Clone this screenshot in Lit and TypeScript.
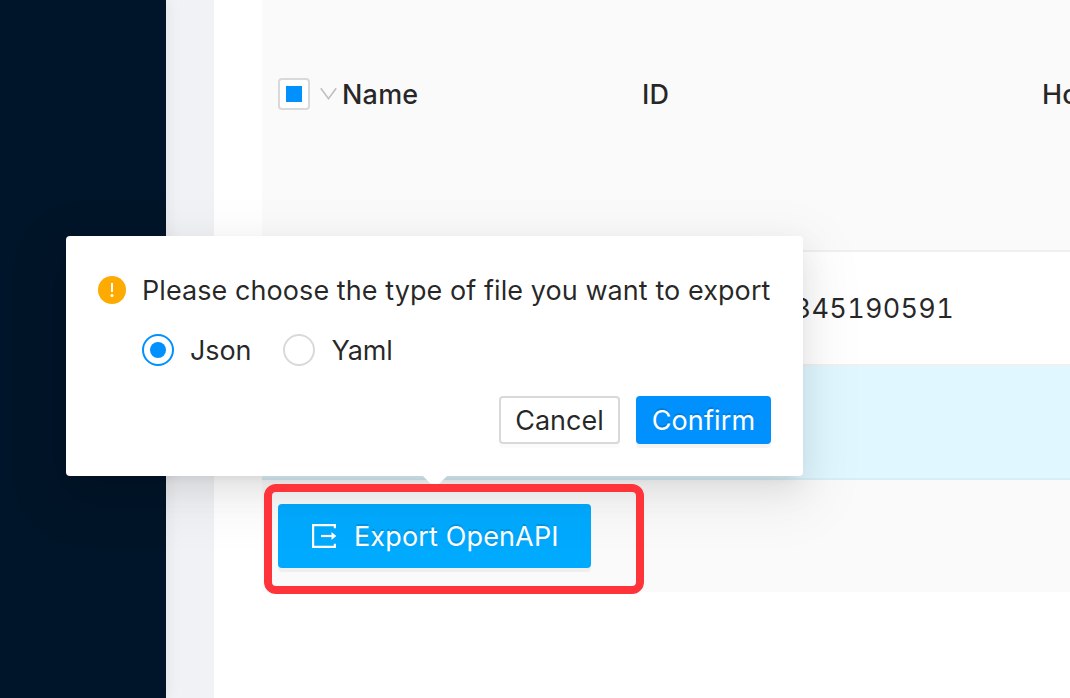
import { LitElement, html, css } from "lit";
import { customElement, property } from "lit/decorators.js";

@customElement("confirm-popover")
export class ConfirmPopover extends LitElement {
  @property() selected = "Json";

  static styles = css`
    :host {
      display: block;
      position: relative;
      box-sizing: border-box;
      width: 737px;
      height: 240px;
      padding: 32px;
      background: #fff;
      border-radius: 4px;
      color: rgba(0, 0, 0, 0.85);
      font-size: 27px;
      line-height: 44px;
      box-shadow: 0 6px 12px -8px rgba(0, 0, 0, 0.12), 0 12px 32px rgba(0, 0, 0, 0.08),
        0 18px 56px 16px rgba(0, 0, 0, 0.05);
    }
    .title {
      display: flex;
      align-items: center;
      gap: 16px;
      height: 44px;
      white-space: nowrap;
    }
    .title svg { flex: none; }
    .title span { padding-top: 2px; letter-spacing: 0.07px; }
    .options {
      display: flex;
      height: 44px;
      margin: 16px 0 0 44px;
      white-space: nowrap;
    }
    .option { display: flex; align-items: center; }
    .option + .option { margin-left: 32px; }
    .option span { margin-left: 16px; padding-top: 2px; letter-spacing: -0.1px; }
    .radio {
      display: flex;
      align-items: center;
      justify-content: center;
      box-sizing: border-box;
      width: 32px;
      height: 32px;
      border: 2px solid #d9d9d9;
      border-radius: 50%;
    }
    .radio.on { border-color: #0091ff; }
    .radio.on::after {
      content: "";
      width: 16px;
      height: 16px;
      border-radius: 50%;
      background: #0091ff;
    }
    .actions {
      display: flex;
      justify-content: flex-end;
      gap: 16px;
      margin-top: 24px;
    }
    .btn {
      box-sizing: border-box;
      height: 48px;
      border: 2px solid #d9d9d9;
      border-radius: 4px;
      text-align: center;
      white-space: nowrap;
      letter-spacing: 0.02px;
      line-height: 45px;
      box-shadow: 0 4px 0 rgba(0, 0, 0, 0.016);
    }
    .cancel { width: 121px; }
    .primary {
      width: 135px;
      border-color: #0091ff;
      background: #0091ff;
      color: #fff;
      letter-spacing: 0.15px;
      text-shadow: 0 -2px 0 rgba(0, 0, 0, 0.12);
      box-shadow: 0 4px 0 rgba(0, 0, 0, 0.043);
    }
    .arrow {
      position: absolute;
      left: 357px;
      top: 228px;
      width: 24px;
      height: 24px;
      clip-path: polygon(0 50%, 100% 50%, 50% 100%);
      background: #fff;
    }
  `;

  render() {
    return html`
      <div class="title">
        <svg width="28" height="28" viewBox="0 0 28 28">
          <circle cx="14" cy="14" r="14" fill="#ffaa00" />
          <path d="M13 7h2v9h-2z" fill="#fff" />
          <circle cx="14" cy="19.6" r="1.5" fill="#fff" />
        </svg>
        <span>Please choose the type of file you want to export</span>
      </div>
      <div class="options">
        ${["Json", "Yaml"].map(
          (name) => html`<div class="option">
            <i class="radio ${name === this.selected ? "on" : ""}"></i><span>${name}</span>
          </div>`
        )}
      </div>
      <div class="actions">
        <div class="btn cancel">Cancel</div>
        <div class="btn primary">Confirm</div>
      </div>
      <div class="arrow"></div>
    `;
  }
}

@customElement("app-root")
export class AppRoot extends LitElement {
  static styles = css`
    :host {
      display: flex;
      position: relative;
      width: 1070px;
      height: 698px;
      overflow: hidden;
      background: #f0f2f5;
      font-family: Inter, "Liberation Sans", sans-serif;
      font-size: 27px;
      color: rgba(0, 0, 0, 0.85);
    }
    .sider {
      flex: none;
      width: 166px;
      background: #001529;
      box-shadow: 2px 0 14px rgba(0, 0, 0, 0.06);
    }
    .content {
      flex: 1;
      min-width: 0;
      margin-left: 48px;
      padding-left: 48px;
      background: #fff;
    }
    .row {
      display: grid;
      grid-template-columns: 364px 400px 400px;
      align-items: center;
      box-sizing: border-box;
      height: 114px;
      padding-left: 16px;
      border-bottom: 2px solid #f0f0f0;
      white-space: nowrap;
    }
    .head {
      height: 252px;
      padding-bottom: 62px;
      background: #fafafa;
      font-weight: 500;
      letter-spacing: 0.2px;
    }
    .first { display: flex; align-items: center; }
    .check {
      display: flex;
      align-items: center;
      justify-content: center;
      box-sizing: border-box;
      width: 32px;
      height: 32px;
      border: 2px solid #d9d9d9;
      border-radius: 4px;
      background: #fff;
    }
    .check::after { content: ""; width: 16px; height: 16px; background: #0091ff; }
    .first svg { margin: 0 5px 0 10px; }
    .num {
      grid-column: 2;
      width: 312px;
      text-align: right;
      font-variant-numeric: tabular-nums;
      letter-spacing: 0.3px;
    }
    .selected { background: #e0f7ff; border-color: #d9eff7; }
    .foot {
      box-sizing: border-box;
      height: 112px;
      padding: 24px 16px;
      background: #fafafa;
    }
    .export {
      display: flex;
      align-items: center;
      box-sizing: border-box;
      width: 313px;
      height: 64px;
      padding-left: 32px;
      border-radius: 4px;
      background: #00aaff;
      color: #fff;
      letter-spacing: 0.14px;
      white-space: nowrap;
      text-shadow: 0 -2px 0 rgba(0, 0, 0, 0.12);
      box-shadow: 0 4px 0 rgba(0, 0, 0, 0.043);
    }
    .export svg { margin-right: 16px; }
    .marker {
      position: absolute;
      left: 264px;
      top: 484px;
      box-sizing: border-box;
      width: 380px;
      height: 110px;
      border: 8px solid #ff333a;
      border-radius: 12px;
    }
    confirm-popover { position: absolute; left: 66px; top: 236px; }
  `;

  render() {
    return html`
      <div class="sider"></div>
      <div class="content">
        <div class="row head">
          <div class="first">
            <i class="check"></i>
            <svg width="17" height="14" viewBox="0 0 17 14">
              <path d="M.8 1.200l7.700 10.500L16.200 1.200" fill="none" stroke="#bfbfbf" stroke-width="1.600" />
            </svg>
            <span>Name</span>
          </div>
          <div>ID</div>
          <div>Host</div>
        </div>
        <div class="row"><div class="num">345190591</div></div>
        <div class="row selected"></div>
        <div class="foot">
          <div class="export">
            <svg width="28" height="28" viewBox="0 0 28 28">
              <path d="M24.900 6.300V3.100H3.100v21.800h21.800v-3.200" fill="none" stroke="#fff" stroke-width="2.200" />
              <path d="M11 14H23" stroke="#fff" stroke-width="2.200" />
              <path d="M21.500 10l4.800 4-4.800 4z" fill="#fff" />
            </svg>
            <span>Export OpenAPI</span>
          </div>
        </div>
      </div>
      <confirm-popover></confirm-popover>
      <div class="marker"></div>
    `;
  }
}
